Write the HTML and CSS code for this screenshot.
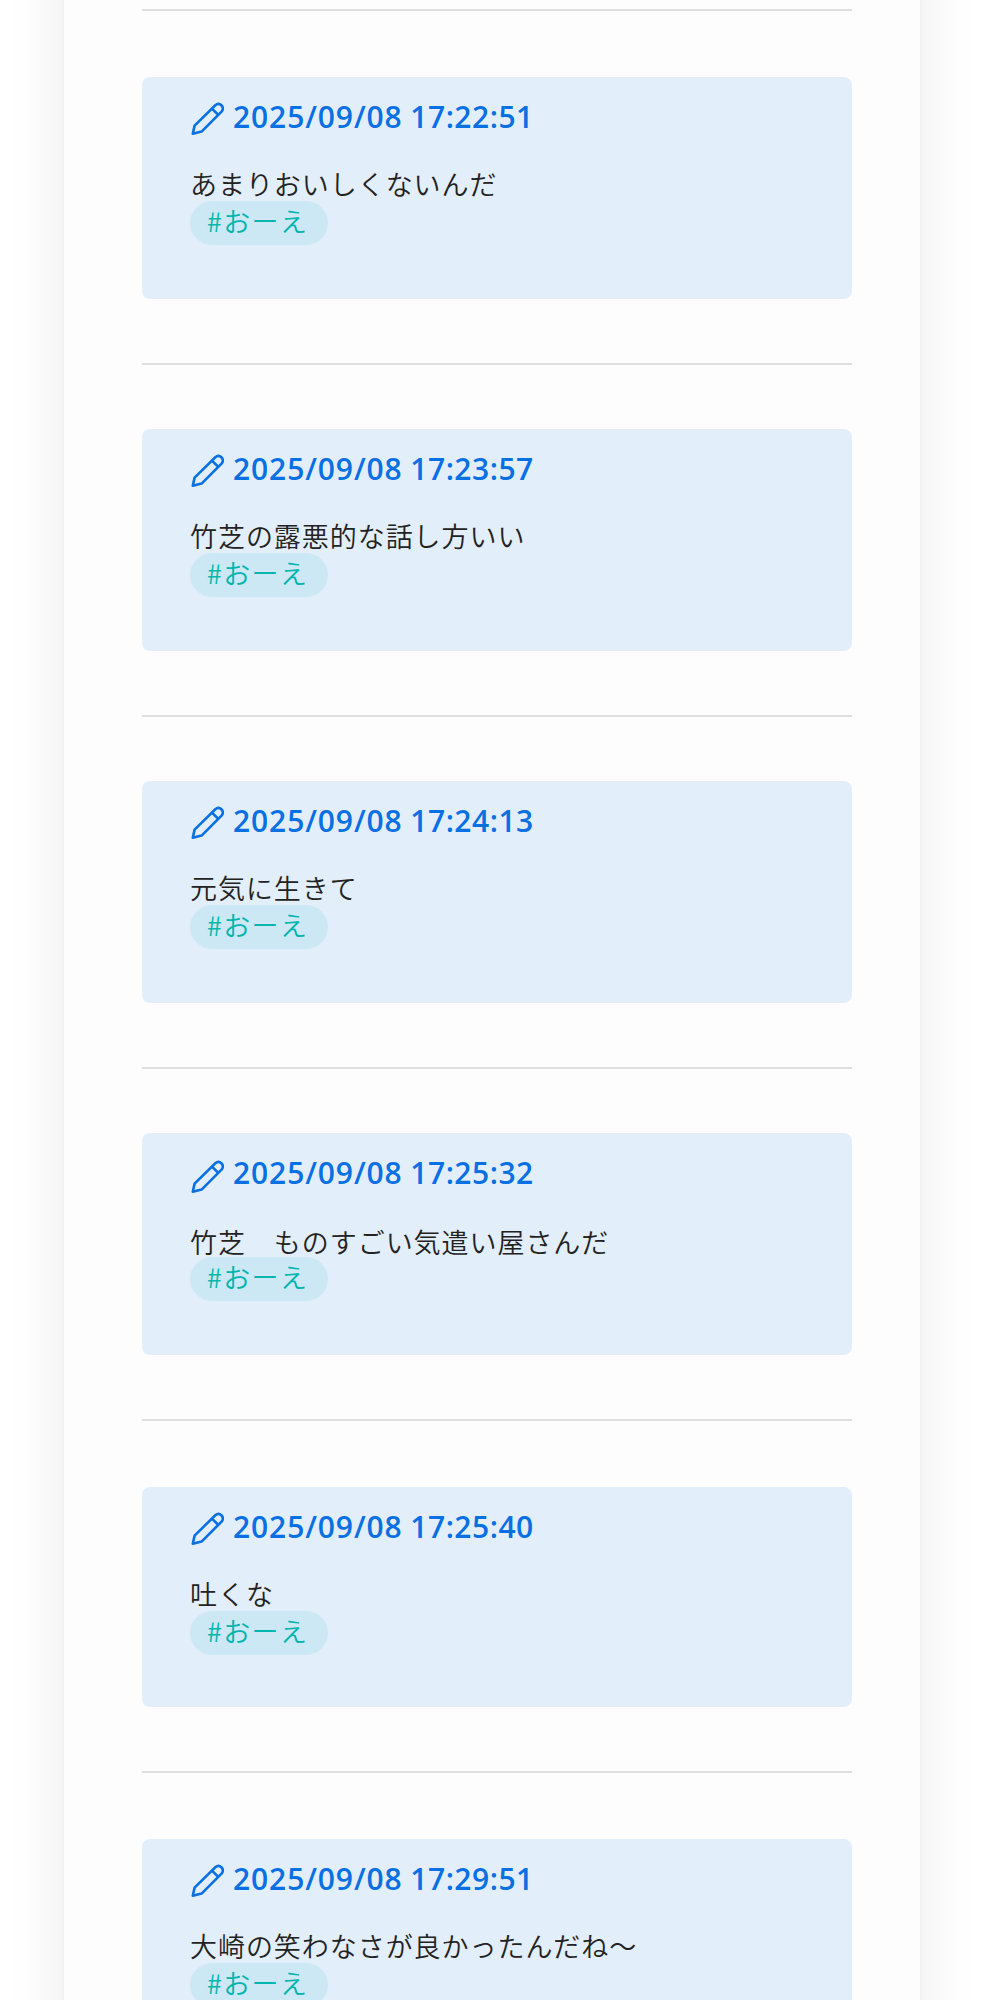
FILE: index.html
```
<!DOCTYPE html>
<html lang="ja">
<head>
<meta charset="utf-8">
<title>メモ</title>
<link rel="stylesheet" href="styles.css">
</head>
<body>
<svg width="0" height="0" class="defs" aria-hidden="true">
  <symbol id="pen" viewBox="0 0 34 34">
    <path d="M2.8 31.8 L4.6 23.6 L25.6 3 C29.6-.4 35 5 31.8 9.4 L11.6 29.6 Z M22 6.6 L28.4 13" fill="none" stroke="currentColor" stroke-width="2.6" stroke-linejoin="round"/>
  </symbol>
</svg>
<main class="page">
  <hr>
  <article class="memo">
    <h2><svg class="pen"><use href="#pen"/></svg><time><span class="day">2025/09/08 </span>17:22:51</time></h2>
    <p>あまりおいしくないんだ</p><a class="tag">#おーえ</a>
  </article>
  <hr>
  <article class="memo">
    <h2><svg class="pen"><use href="#pen"/></svg><time><span class="day">2025/09/08 </span>17:23:57</time></h2>
    <p>竹芝の露悪的な話し方いい</p><a class="tag">#おーえ</a>
  </article>
  <hr>
  <article class="memo">
    <h2><svg class="pen"><use href="#pen"/></svg><time><span class="day">2025/09/08 </span>17:24:13</time></h2>
    <p>元気に生きて</p><a class="tag">#おーえ</a>
  </article>
  <hr>
  <article class="memo low">
    <h2><svg class="pen"><use href="#pen"/></svg><time><span class="day">2025/09/08 </span>17:25:32</time></h2>
    <p>竹芝　ものすごい気遣い屋さんだ</p><a class="tag">#おーえ</a>
  </article>
  <hr class="wide">
  <article class="memo short">
    <h2><svg class="pen"><use href="#pen"/></svg><time><span class="day">2025/09/08 </span>17:25:40</time></h2>
    <p>吐くな</p><a class="tag">#おーえ</a>
  </article>
  <hr class="wide">
  <article class="memo">
    <h2><svg class="pen"><use href="#pen"/></svg><time><span class="day">2025/09/08 </span>17:29:51</time></h2>
    <p>大崎の笑わなさが良かったんだね〜</p><a class="tag">#おーえ</a>
  </article>
</main>
</body>
</html>
```
FILE: styles.css
```
* { box-sizing: border-box; }
body {
  display: flow-root;
  margin: 0;
  height: 2000px;
  overflow: hidden;
  background: #fff;
  color: #222;
  font-family: "Noto Sans CJK JP", sans-serif;
}
.defs { display: none; }
.page {
  width: 856px;
  margin: -100px 0 0 64px;
  padding: 109px 68px 64px 78px;
  background: #fdfdfd;
  box-shadow: 0 0 56px rgba(0, 0, 0, .085), 0 0 5px rgba(0, 0, 0, .04);
}
hr {
  height: 2px;
  margin: 64px 0;
  border: 0;
  background: #dfdfdf;
}
hr:first-child { margin-top: 0; margin-bottom: 66px; }
hr.wide { margin-bottom: 66px; }
.memo {
  height: 222px;
  padding: 20px 48px 0;
  border-radius: 8px;
  background: #e2eefa;
}
.memo.short { height: 220px; }
h2 {
  display: flex;
  height: 40px;
  margin: 0;
  color: #0870e2;
  font: 600 30px/40px "Open Sans", sans-serif;
}
.pen {
  width: 34px;
  height: 34px;
  margin: 5px 9px 0 0;
}
time { letter-spacing: .5px; white-space: pre; }
.day { letter-spacing: .9px; word-spacing: -1px; }
p {
  height: 38px;
  margin: 26px 0 0;
  font-size: 27px;
  font-weight: 350;
  line-height: 42px;
  letter-spacing: .95px;
  white-space: nowrap;
}
.low .pen { margin-top: 7px; }
.low p { margin-top: 28px; margin-bottom: -2px; }
.tag {
  display: block;
  width: 138px;
  height: 44px;
  padding-left: 17px;
  border-radius: 22px;
  background: #cce8f4;
  color: #00b5ad;
  font-size: 27px;
  font-weight: 350;
  line-height: 40px;
  letter-spacing: 1.4px;
  white-space: nowrap;
}
```
